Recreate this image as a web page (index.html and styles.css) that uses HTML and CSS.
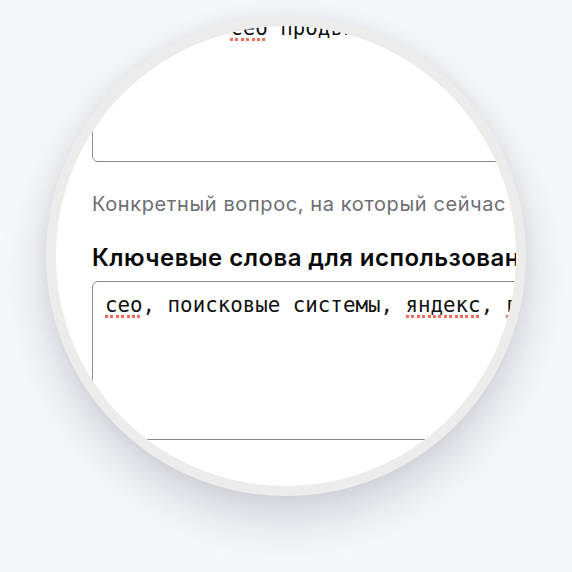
FILE: index.html
```html
<!DOCTYPE html>
<html lang="ru">
<head>
<meta charset="utf-8">
<title>Лупа</title>
<link rel="stylesheet" href="styles.css">
</head>
<body>
<div class="stage">
  <div class="lens">
    <div class="lens-content">
      <div class="field"><span>Например: </span><span class="typo">сео</span> продвижение сайта в поисковых системах</div>
      <p class="hint">Конкретный вопрос, на который сейчас нужно ответить</p>
      <h2 class="label">Ключевые слова для использования</h2>
      <div class="field"><span class="typo">сео</span>, поисковые системы, <span class="typo">яндекс</span>, <span class="typo">гугл</span></div>
    </div>
  </div>
</div>
</body>
</html>
```
FILE: styles.css
```css
* { box-sizing: border-box; }
html, body {
  margin: 0;
  padding: 0;
  background: #f6f7fa;
}
.stage {
  width: 572px;
  height: 572px;
  display: flex;
  justify-content: center;
  align-items: flex-start;
  padding-top: 16px;
}
.lens {
  width: 480px;
  height: 480px;
  border: 10px solid #ececec;
  border-radius: 50%;
  overflow: hidden;
  background: #fff;
  box-shadow: 0 22px 48px rgba(20, 24, 40, 0.17), 0 0 18px rgba(20, 24, 40, 0.05);
}
.lens-content {
  display: flex;
  flex-direction: column;
  align-items: flex-start;
  padding-left: 36px;
  margin-top: -22px;
}
.field {
  width: 520px;
  height: 158px;
  flex: none;
  border: 1px solid #8a8a90;
  border-radius: 6px;
  padding: 8px 12px;
  font-family: "DejaVu Sans Mono", monospace;
  font-size: 20.8px;
  line-height: 30px;
  color: #111;
  white-space: pre;
}
.typo {
  padding-bottom: 1px;
  background-image: repeating-linear-gradient(90deg, #ef6f5e 0 3px, transparent 3px 5.4px);
  background-size: 100% 3px;
  background-repeat: no-repeat;
  background-position: 0 100%;
}
.hint {
  margin: 30px 0 0;
  font-family: "Inter", "Noto Sans", sans-serif;
  font-size: 20px;
  letter-spacing: 0.6px;
  line-height: 24px;
  color: #6e6e73;
  white-space: nowrap;
}
.label {
  margin: 27px 0 8px;
  font-family: "Inter", "Noto Sans", sans-serif;
  font-size: 24px;
  font-weight: 600;
  letter-spacing: 0.45px;
  line-height: 30px;
  color: #0a0a0a;
  white-space: nowrap;
}
.label + .field { height: 159px; }
```
